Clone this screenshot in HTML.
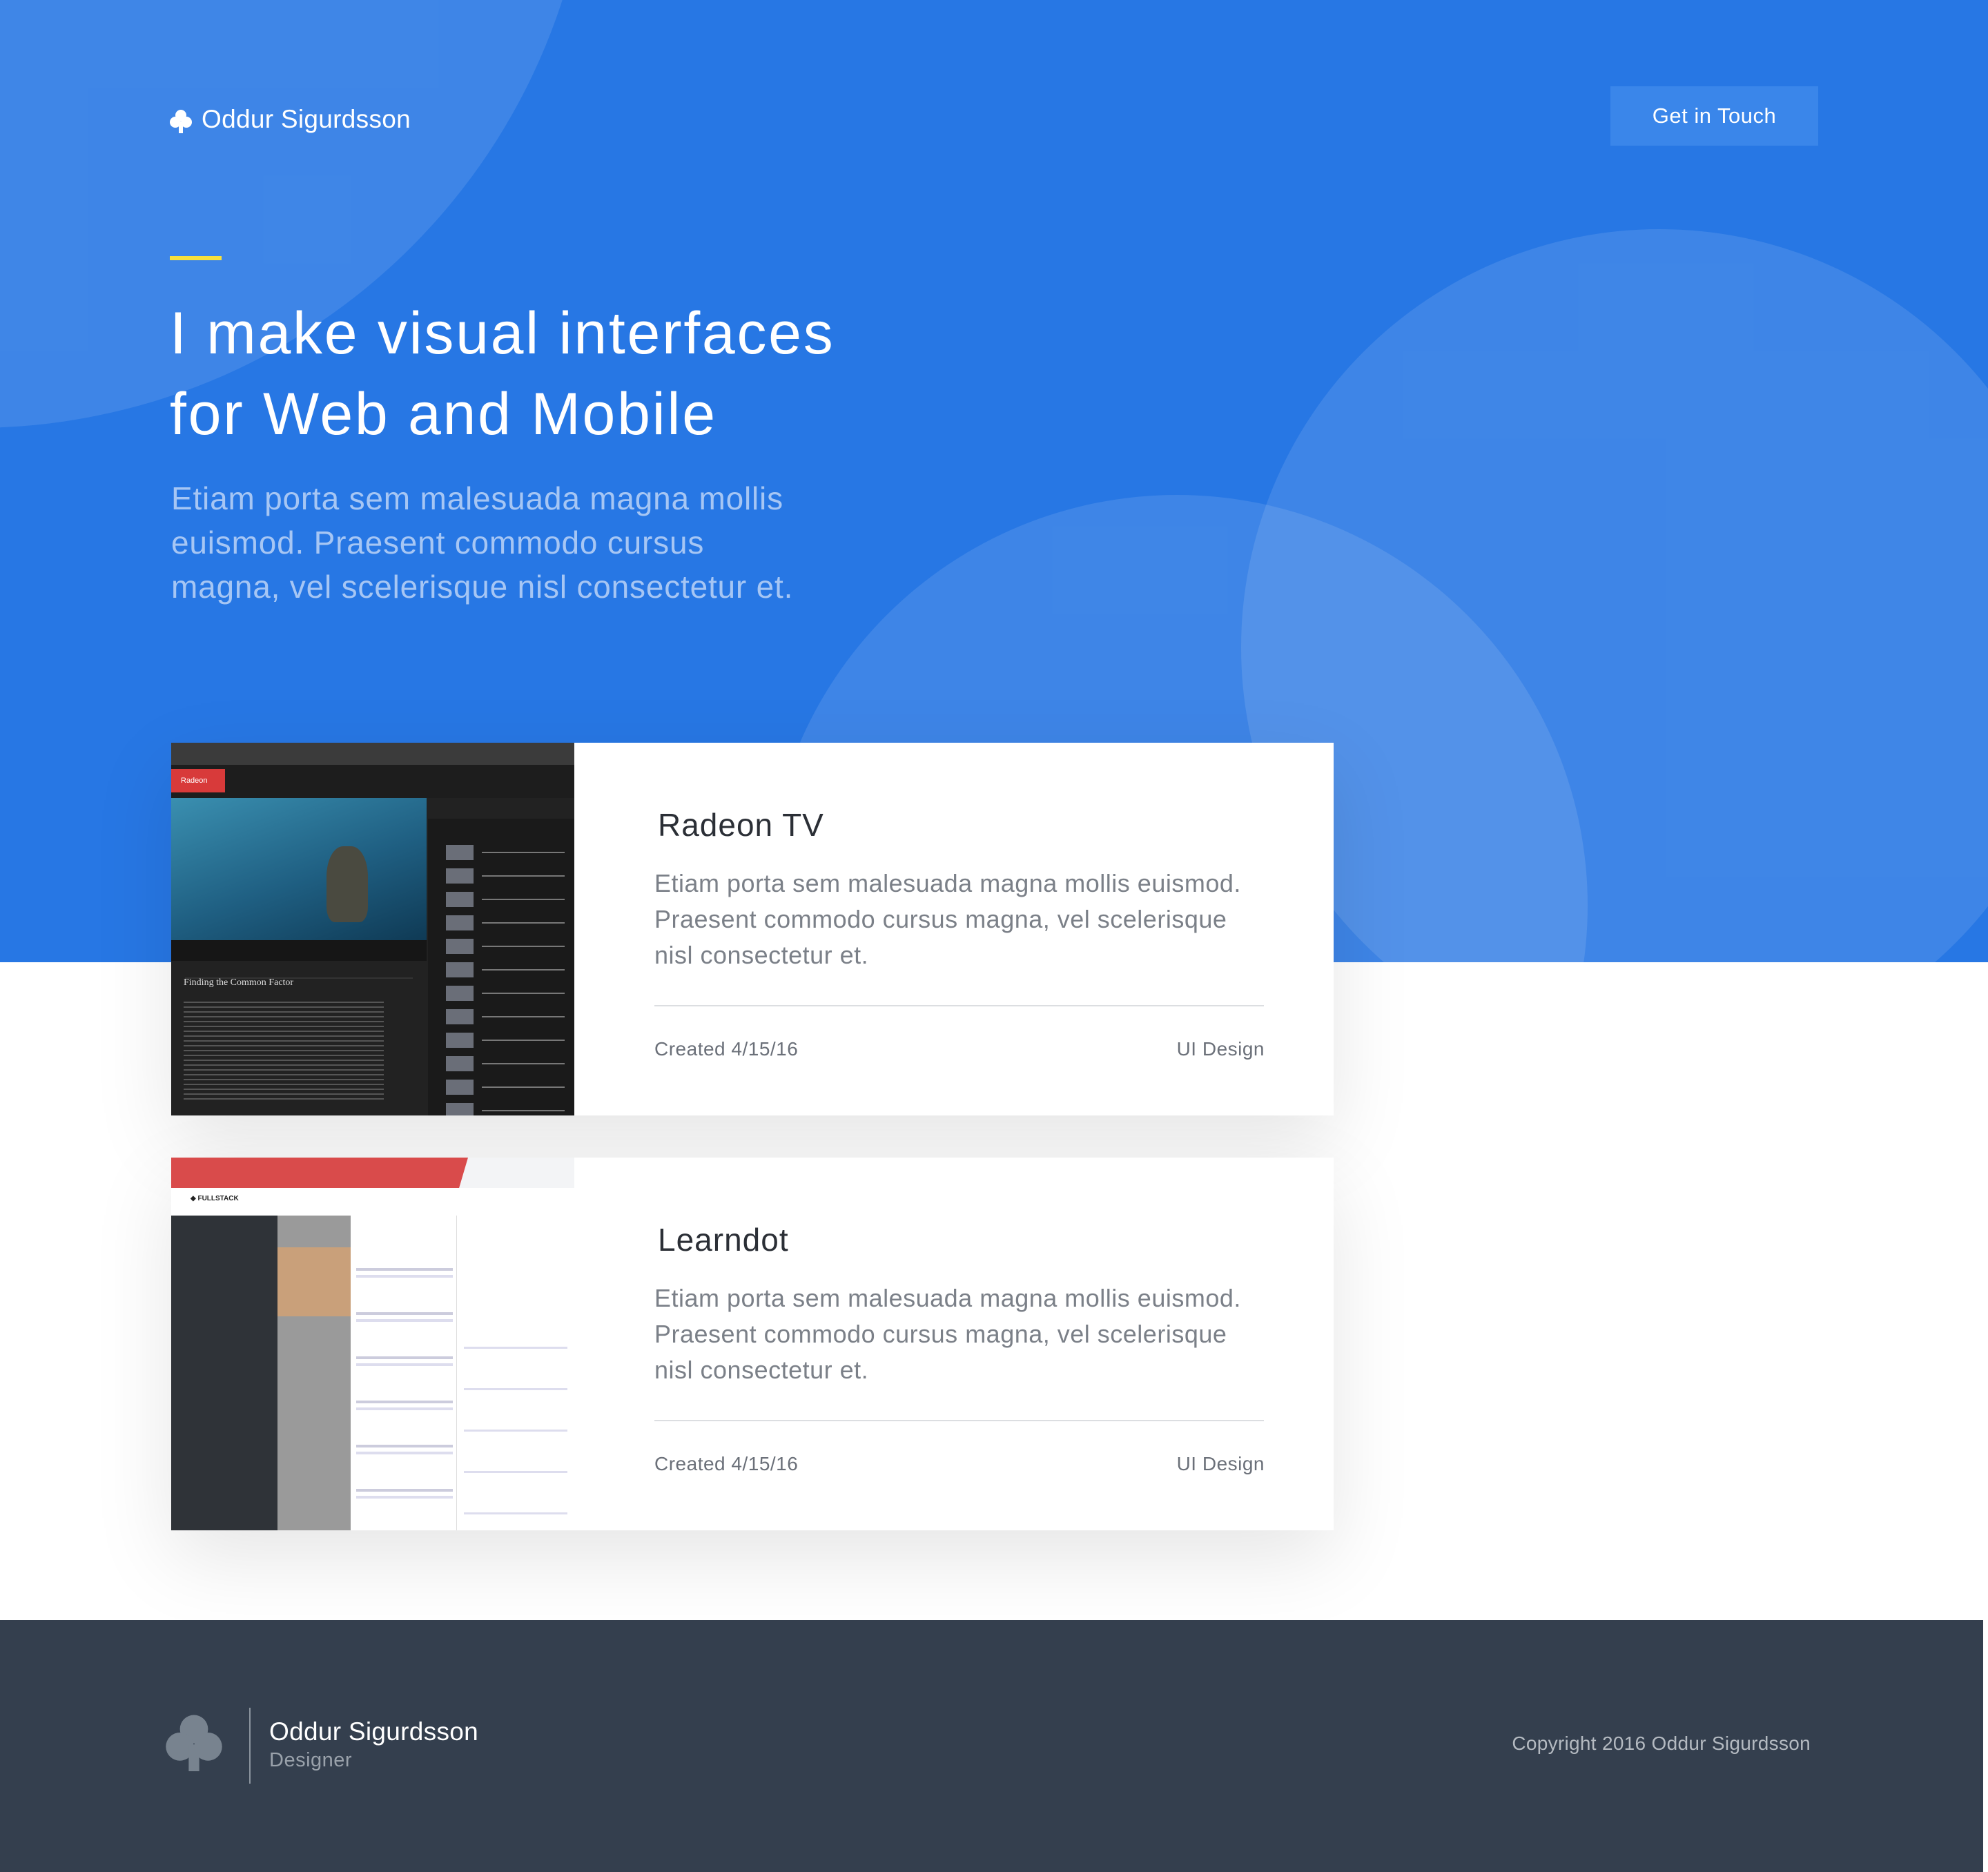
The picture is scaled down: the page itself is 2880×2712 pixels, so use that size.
<!DOCTYPE html>
<html><head><meta charset="utf-8"><style>
*{margin:0;padding:0;box-sizing:border-box}
body{width:2880px;height:2712px;background:#fff;font-family:"Liberation Sans",sans-serif;position:relative;overflow:hidden}
.hero{position:absolute;left:0;top:0;width:2880px;height:1394px;background:#2777e4;overflow:hidden}
.circ{position:absolute;border-radius:50%;background:rgba(255,255,255,0.11)}
.abs{position:absolute}
.card{position:absolute;left:248px;width:1684px;height:540px;background:#fff;box-shadow:0 40px 110px rgba(0,0,0,0.10)}
.shot{position:absolute;left:0;top:0;width:584px;height:540px;overflow:hidden}
.ct{position:absolute;left:705px;font-size:46px;color:#2b2f36;letter-spacing:1px}
.cd{position:absolute;left:700px;width:860px;font-size:36px;line-height:52px;color:#7b8088;letter-spacing:.5px}
.hr{position:absolute;left:700px;width:883px;height:2px;background:#dcdee1}
.meta{position:absolute;font-size:28px;color:#6b7079;letter-spacing:.5px}
</style></head><body>
<div class="hero">
 <div class="circ" style="left:-932px;top:-1170px;width:1790px;height:1790px"></div>
 <div class="circ" style="left:1798px;top:332px;width:1212px;height:1212px"></div>
 <div class="circ" style="left:1110px;top:717px;width:1190px;height:1190px"></div>
</div>
<!-- logo -->
<svg class="abs" style="left:246px;top:158px" width="32" height="36" viewBox="0 0 32 36"><circle cx="16" cy="9" r="8" fill="#fff"/><circle cx="8" cy="19" r="8" fill="#fff"/><circle cx="24" cy="19" r="8" fill="#fff"/><rect x="13" y="18" width="6" height="17" fill="#fff"/></svg>
<div class="abs" style="left:292px;top:152px;font-size:37px;color:#fff;letter-spacing:.3px">Oddur Sigurdsson</div>
<div class="abs" style="left:2333px;top:125px;width:301px;height:86px;background:#3a86ea;color:#fff;font-size:31px;text-align:center;line-height:86px;letter-spacing:.5px">Get in Touch</div>
<div class="abs" style="left:246px;top:371px;width:75px;height:6px;background:#f8e03a"></div>
<div class="abs" style="left:246px;top:425px;font-size:86px;line-height:117px;color:#fff;letter-spacing:2.7px">I make visual interfaces<br>for Web and Mobile</div>
<div class="abs" style="left:248px;top:690px;font-size:46px;line-height:64px;color:#a6c6f4;letter-spacing:.8px">Etiam porta sem malesuada magna mollis<br>euismod. Praesent commodo cursus<br>magna, vel scelerisque nisl consectetur et.</div>

<!-- card 1 -->
<div class="card" style="top:1076px">
 <div class="shot" style="background:#222">
  <div class="abs" style="left:0;top:0;width:584px;height:32px;background:#3b3b3b"></div>
  <div class="abs" style="left:0;top:32px;width:584px;height:48px;background:#1d1d1d"></div>
  <div class="abs" style="left:0;top:38px;width:78px;height:34px;background:#d83a3a;color:#fff;font-size:11px;line-height:34px;padding-left:14px">Radeon</div>
  <div class="abs" style="left:0;top:80px;width:370px;height:206px;background:linear-gradient(160deg,#3a8fb0,#1f5f82 55%,#0f3a55)"></div>
  <div class="abs" style="left:225px;top:150px;width:60px;height:110px;border-radius:40% 40% 20% 20%;background:#4a4a40"></div>
  <div class="abs" style="left:0;top:286px;width:370px;height:30px;background:#161616"></div>
  <div class="abs" style="left:372px;top:110px;width:212px;height:430px;background:#1a1a1a"></div>
  <div class="abs" style="left:20px;top:340px;width:330px;height:2px;background:#333"></div>
  <div class="abs" style="left:18px;top:340px;font-family:'Liberation Serif',serif;font-size:14px;color:#ddd">Finding the Common Factor</div>
  <div class="abs" style="left:18px;top:370px;width:290px;height:150px;background:repeating-linear-gradient(#222 0 5px,#555 5px 7px)"></div>
  <div class="abs" style="left:398px;top:140px;width:40px;height:420px;background:repeating-linear-gradient(#1a1a1a 0 8px,#6a6e78 8px 30px,#1a1a1a 30px 34px)"></div>
  <div class="abs" style="left:450px;top:150px;width:120px;height:400px;background:repeating-linear-gradient(#1a1a1a 0 8px,#777 8px 10px,#1a1a1a 10px 34px)"></div>
 </div>
 <div class="ct" style="top:92px">Radeon TV</div>
 <div class="cd" style="top:178px">Etiam porta sem malesuada magna mollis euismod. Praesent commodo cursus magna, vel scelerisque nisl consectetur et.</div>
 <div class="hr" style="top:380px"></div>
 <div class="meta" style="left:700px;top:428px">Created 4/15/16</div>
 <div class="meta" style="right:100px;top:428px">UI Design</div>
</div>

<!-- card 2 -->
<div class="card" style="top:1677px">
 <div class="shot" style="background:#f3f4f6">
  <div class="abs" style="left:0;top:0;width:430px;height:44px;background:#d94b4b;clip-path:polygon(0 0,100% 0,97% 100%,0 100%)"></div>
  <div class="abs" style="left:0;top:44px;width:584px;height:40px;background:#fff"></div>
  <div class="abs" style="left:28px;top:54px;font-size:10px;font-weight:bold;color:#222">◆ FULLSTACK</div>
  <div class="abs" style="left:0;top:84px;width:154px;height:456px;background:#2f3338"></div>
  <div class="abs" style="left:154px;top:84px;width:106px;height:456px;background:#9a9a9a"></div>
  <div class="abs" style="left:154px;top:130px;width:106px;height:100px;background:#c9a07a"></div>
  <div class="abs" style="left:260px;top:84px;width:154px;height:456px;background:#fff;border-right:1px solid #ddd"></div>
  <div class="abs" style="left:268px;top:150px;width:140px;height:360px;background:repeating-linear-gradient(#fff 0 10px,#ccd 10px 14px,#fff 14px 20px,#dde 20px 24px,#fff 24px 64px)"></div>
  <div class="abs" style="left:414px;top:84px;width:170px;height:456px;background:#fff"></div>
  <div class="abs" style="left:424px;top:260px;width:150px;height:260px;background:repeating-linear-gradient(#fff 0 14px,#dde 14px 17px,#fff 17px 60px)"></div>
 </div>
 <div class="ct" style="top:92px">Learndot</div>
 <div class="cd" style="top:178px">Etiam porta sem malesuada magna mollis euismod. Praesent commodo cursus magna, vel scelerisque nisl consectetur et.</div>
 <div class="hr" style="top:380px"></div>
 <div class="meta" style="left:700px;top:428px">Created 4/15/16</div>
 <div class="meta" style="right:100px;top:428px">UI Design</div>
</div>

<!-- footer -->
<div class="abs" style="left:0;top:2347px;width:2873px;height:365px;background:#343f4e"></div>
<svg class="abs" style="left:240px;top:2482px" width="82" height="84" viewBox="0 0 32 33"><circle cx="16" cy="9" r="8" fill="#78838f"/><circle cx="8" cy="19" r="8" fill="#78838f"/><circle cx="24" cy="19" r="8" fill="#78838f"/><rect x="13" y="18" width="6" height="15" fill="#78838f"/></svg>
<div class="abs" style="left:361px;top:2474px;width:2px;height:110px;background:#8b949e"></div>
<div class="abs" style="left:390px;top:2488px;font-size:37px;color:#fff;letter-spacing:.3px">Oddur Sigurdsson</div>
<div class="abs" style="left:390px;top:2534px;font-size:29px;color:#9aa2ab;letter-spacing:.5px">Designer</div>
<div class="abs" style="right:257px;top:2510px;font-size:28px;color:#b4bac1;letter-spacing:.3px">Copyright 2016 Oddur Sigurdsson</div>
</body></html>
